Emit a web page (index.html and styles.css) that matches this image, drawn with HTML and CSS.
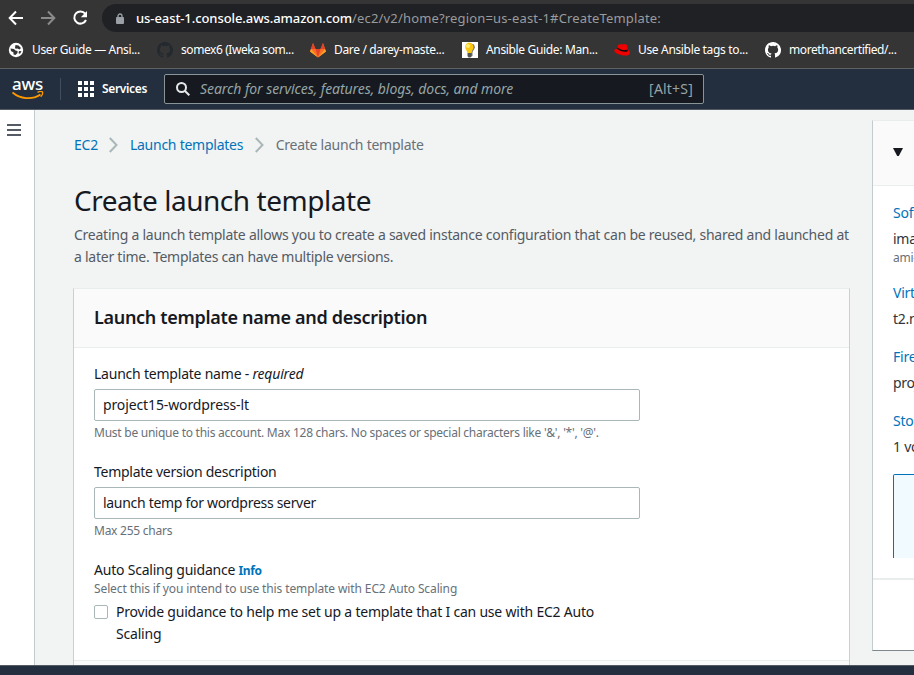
FILE: index.html
```
<!DOCTYPE html>
<html lang="en">
<head>
<meta charset="utf-8">
<title>Create launch template</title>
<link rel="stylesheet" href="styles.css">
</head>
<body>
<div class="toolbar">
  <svg class="nav-icons" width="92" height="28" viewBox="0 0 92 28" fill="none" stroke-width="2">
    <path d="M23 14H10M16 7.500L9.700 14l6.300 6.500" stroke="#fff"/>
    <path d="M41 14h13M48 7.500l6.300 6.500-6.300 6.500" stroke="#8b8b8b"/>
    <path d="M85.200 9.700A6.100 6.100 0 1 0 86 16" stroke="#fff"/>
    <path d="M87 7v6.200h-6.200z" fill="#fff"/>
  </svg>
  <div class="omnibox">
    <svg class="lock" width="8" height="11" viewBox="0 0 8 11"><path d="M2 5V3a2 2 0 0 1 4 0v2" fill="none" stroke="#9aa0a6" stroke-width="1.300"/><rect y="4" width="8" height="7" rx="1" fill="#9aa0a6"/></svg>
    <span class="host">us-east-1.console.aws.amazon.com</span><span class="path">/ec2/v2/home?region=us-east-1#CreateTemplate:</span>
  </div>
</div>
<div class="bookmarks">
  <div class="bm"><svg width="16" height="16" viewBox="0 0 16 16"><circle cx="8" cy="8" r="7.200" fill="#fff"/><path d="M2.500 6.500l3.500.500 1.500 1.500 2 .500v2L7.500 13l-2-.500V10.500L3 9zM7.500 3l3 .500L13 6l-1.500 1.500-2-1-2 .300L7 5.500zM11 9l2.500.300-1.500 2.500-1.500-.500z" fill="#353535"/></svg><span>User Guide — Ansi...</span></div>
  <div class="bm"><svg width="16" height="16" viewBox="0 0 16 16"><path fill="#24292f" d="M8 0C3.580 0 0 3.580 0 8c0 3.540 2.290 6.530 5.470 7.590.4.070.55-.17.55-.38v-1.490c-2.010.37-2.530-.49-2.690-.94-.09-.23-.48-.94-.82-1.130-.28-.15-.68-.52-.01-.53.63-.01 1.080.58 1.230.82.72 1.210 1.870.87 2.330.66.070-.52.28-.87.51-1.070-1.780-.2-3.640-.89-3.640-3.950 0-.87.31-1.590.82-2.150-.08-.2-.36-1.020.08-2.120 0 0 .67-.21 2.200.82a7.400 7.400 0 0 1 4 0c1.530-1.040 2.200-.82 2.200-.82.44 1.100.16 1.920.08 2.120.51.56.82 1.270.82 2.150 0 3.070-1.870 3.750-3.650 3.950.29.25.54.73.54 1.480v2.200c0 .21.15.46.55.38A8 8 0 0 0 8 0z"/></svg><span>somex6 (Iweka som...</span></div>
  <div class="bm"><svg width="16" height="16" viewBox="0 0 16 16"><path fill="#fc6d26" d="M0 9.500L3 1l2.500 6h5L13 1l3 8.500L8 15.500z"/><path fill="#e24329" d="M5.500 7h5L8 15.500zM3 1l2.500 6H1zM13 1l-2.500 6H15z"/><path fill="#fca326" d="M1 7l-1 2.500 8 6zM15 7l1 2.500-8 6z"/></svg><span>Dare / darey-maste...</span></div>
  <div class="bm"><svg width="16" height="16" viewBox="0 0 16 16"><path fill="#fff" d="M0 0h16v16H0z"/><path d="M9 1.500l3 1 1 3-2.500 4.500v4L8.500 15z" fill="#777"/><path fill="#fbc711" d="M7 .500a4.700 4.700 0 0 1 3.200 8L9.500 11h-4L4.500 8.500a4.700 4.700 0 0 1 2.500-8z"/><circle cx="6" cy="4" r="2" fill="#ffec75"/><path fill="#555" d="M5.500 11h4v3l-1 1.500h-2l-1-1.500z"/></svg><span>Ansible Guide: Man...</span></div>
  <div class="bm"><svg width="16" height="16" viewBox="0 0 16 16"><path fill="#e00" d="M4 3l3.500-1 1.500.500 2-.500 2 1 .800 4.500 1.700 1.500c1.500 3-1 4.600-4.500 4.500C6 13.500-.500 10.500.300 8 .700 7 2 6.800 3 7z"/><path fill="#180808" d="M3.200 6.500c2 2.700 8 4.500 10.700 2.500l-.400-1.500C10.500 9 5.500 7.500 3.500 5.500z"/></svg><span>Use Ansible tags to...</span></div>
  <div class="bm"><svg width="16" height="16" viewBox="0 0 16 16"><path fill="#fff" d="M8 0C3.580 0 0 3.580 0 8c0 3.540 2.290 6.530 5.470 7.590.4.070.55-.17.55-.38v-1.490c-2.010.37-2.530-.49-2.690-.94-.09-.23-.48-.94-.82-1.130-.28-.15-.68-.52-.01-.53.63-.01 1.080.58 1.230.82.72 1.210 1.870.87 2.330.66.070-.52.28-.87.51-1.070-1.780-.2-3.640-.89-3.640-3.950 0-.87.31-1.590.82-2.150-.08-.2-.36-1.020.08-2.120 0 0 .67-.21 2.200.82a7.400 7.400 0 0 1 4 0c1.530-1.040 2.200-.82 2.200-.82.44 1.100.16 1.920.08 2.120.51.56.82 1.270.82 2.150 0 3.070-1.870 3.750-3.650 3.950.29.25.54.73.54 1.480v2.200c0 .21.15.46.55.38A8 8 0 0 0 8 0z"/></svg><span>morethancertified/...</span></div>
</div>
<div class="aws-nav">
  <div class="logo">
    <span class="logo-text">aws</span>
    <svg class="smile" width="32" height="9" viewBox="0 0 32 9" fill="none" stroke="#f90"><path d="M.500 1.500C8 8 20 9.300 28.500 3.500" stroke-width="1.800"/><path d="M25.500 1.300c2-.900 4-1 5-.400.400 1.300-.300 3.500-1.800 5" stroke-width="1.300"/></svg>
  </div>
  <div class="sep"></div>
  <svg class="grid-icon" width="16" height="16" viewBox="0 0 16 16" fill="#fff"><path d="M0 0h4v4H0zM6 0h4v4H6zM12 0h4v4h-4zM0 6h4v4H0zM6 6h4v4H6zM12 6h4v4h-4zM0 12h4v4H0zM6 12h4v4H6zM12 12h4v4h-4z"/></svg>
  <span class="services">Services</span>
  <div class="search">
    <svg width="14" height="14" viewBox="0 0 14 14" fill="none" stroke="#e5e9e9" stroke-width="2"><circle cx="5.500" cy="5.500" r="4.500"/><path d="M9 9l4.300 4.300"/></svg>
    <span class="placeholder">Search for services, features, blogs, docs, and more</span>
    <span class="alt">[Alt+S]</span>
  </div>
</div>
<div class="body">
  <div class="rail"><svg width="14" height="12" viewBox="0 0 14 12" fill="#545b64"><path d="M0 0h14v2H0zM0 5h14v2H0zM0 10h14v2H0z"/></svg></div>
  <main class="main">
    <nav class="crumbs">
      <a>EC2</a>
      <svg width="9" height="16" viewBox="0 0 9 16" fill="none" stroke="#aab7b8" stroke-width="2"><path d="M.800 1L7.500 8 .800 15"/></svg>
      <a>Launch templates</a>
      <svg width="9" height="16" viewBox="0 0 9 16" fill="none" stroke="#aab7b8" stroke-width="2"><path d="M.800 1L7.500 8 .800 15"/></svg>
      <span>Create launch template</span>
    </nav>
    <h1>Create launch template</h1>
    <p class="intro">Creating a launch template allows you to create a saved instance configuration that can be reused, shared and launched at<br>a later time. Templates can have multiple versions.</p>
    <section class="card">
      <h2>Launch template name and description</h2>
      <div class="fields">
        <div class="label">Launch template name - <i>required</i></div>
        <div class="input name">project15-wordpress-lt</div>
        <div class="hint">Must be unique to this account. Max 128 chars. No spaces or special characters like '&amp;', '*', '@'.</div>
        <div class="label version">Template version description</div>
        <div class="input">launch temp for wordpress server</div>
        <div class="hint">Max 255 chars</div>
        <div class="label guidance">Auto Scaling guidance <b>Info</b></div>
        <div class="hint tight">Select this if you intend to use this template with EC2 Auto Scaling</div>
        <div class="check"><span class="box"></span><span>Provide guidance to help me set up a template that I can use with EC2 Auto<br>Scaling</span></div>
      </div>
      <div class="next"></div>
    </section>
  </main>
  <aside class="summary">
    <div class="summary-head"><svg width="10" height="8" viewBox="0 0 10 8"><path d="M0 0h10L5.800 8H4.200z" fill="#16191f"/></svg></div>
    <div class="summary-body">
      <a>Software Image (AMI)</a>
      <p>image for wordpress</p>
      <small>ami-</small>
      <a class="gap">Virtual server type</a>
      <p>t2.micro</p>
      <a class="gap">Firewall</a>
      <p>project15</p>
      <a class="gap">Storage</a>
      <p>1 volume(s)</p>
      <div class="notice"></div>
    </div>
    <div class="summary-foot"></div>
  </aside>
</div>
<footer></footer>
</body>
</html>
```
FILE: styles.css
```
* { box-sizing: border-box; }
body { margin: 0; width: 914px; height: 675px; overflow: hidden; background: #f2f3f3; color: #16191f; font: 14px/22px "Noto Sans", sans-serif; letter-spacing: -0.25px; white-space: nowrap; }
svg { display: block; flex: none; }
h1, h2, p { margin: 0; }
a { color: #0073bb; }

.toolbar { display: flex; height: 36px; padding-top: 4px; background: #353535; }
.nav-icons { margin-right: 10px; }
.omnibox { display: flex; flex: 1; align-items: center; height: 28px; padding-left: 14px; border-radius: 14px 0 0 14px; background: #202124; font-size: 13px; }
.lock { margin-right: 12px; }
.host { color: #fff; font-weight: 500; letter-spacing: -0.08px; }
.path { color: #9a9b9d; letter-spacing: 0.16px; }

.bookmarks { display: flex; height: 33px; padding: 0 0 4px 8px; background: #353535; border-bottom: 1px solid #606162; color: #fff; font-size: 12px; letter-spacing: -0.34px; }
.bm { display: flex; flex: none; align-items: center; gap: 8px; width: 152px; }
.bm:first-child { width: 149px; }
.bm:nth-child(2) { width: 153px; letter-spacing: -0.42px; }
.bm:nth-child(5) { width: 151px; }
.bm:nth-child(6) { letter-spacing: -0.42px; }

.aws-nav { display: flex; align-items: center; height: 41px; background: #232f3e; border-bottom: 1px solid #545b64; color: #fff; }
.logo { width: 32px; margin-left: 12px; }
.logo-text { display: block; height: 14px; font: 500 17px/12px "Noto Sans", sans-serif; letter-spacing: -0.2px; }
.smile { margin-top: -1px; }
.sep { width: 1px; height: 22px; margin: 0 17px 0 16px; background: #414d5c; }
.services { width: 46px; margin: 0 16px 0 8px; font-size: 12px; font-weight: 600; letter-spacing: -0.35px; }
.search { display: flex; align-items: center; width: 540px; height: 30px; padding: 0 10px 0 11px; border: 1px solid #879596; border-radius: 2px; background: #16191f; color: #95a5a6; }
.placeholder { margin-left: 10px; font-style: italic; letter-spacing: -0.07px; }
.alt { margin-left: auto; letter-spacing: 0.2px; }

.body { display: flex; height: 555px; overflow: hidden; }
.rail { flex: none; width: 35px; padding: 14px 0 0 7px; background: #fff; border-right: 1px solid #c3cccc; }
.main { flex: none; width: 837px; padding: 24px 22px 0 38px; }
.crumbs { display: flex; align-items: center; height: 22px; padding-left: 1px; color: #687078; }
.crumbs svg { margin: 0 12px 0 11px; }
.crumbs svg + a { margin-right: 0.5px; }
h1 { margin: 26px 0 6px 1px; font-size: 28px; line-height: 36px; font-weight: 400; letter-spacing: -0.46px; }
.intro { margin-left: 1px; color: #545b64; letter-spacing: -0.25px; }
.card { margin-top: 20px; height: 400px; background: #fff; border: 1px solid #c9d0d0; border-top-color: #eaeded; }
h2 { height: 59px; padding: 17px 20px; background: #fafafa; border-bottom: 1px solid #eaeded; font-size: 18px; line-height: 22px; font-weight: 600; letter-spacing: -0.31px; }
.fields { height: 312px; padding: 15px 20px 0; }
.label { letter-spacing: -0.22px; }
.label i { letter-spacing: -0.19px; }
.label b { color: #0073bb; font-size: 12px; letter-spacing: -0.4px; }
.input { width: 546px; height: 32px; margin: 4px 0 3px; padding: 4px 8px; border: 1px solid #aab7b8; border-radius: 2px; letter-spacing: -0.3px; }
.name { letter-spacing: -0.12px; }
.hint { color: #687078; font-size: 12px; line-height: 18px; }
.version, .guidance { margin-top: 19px; }
.version { letter-spacing: -0.27px; }
.tight { margin-top: -2px; letter-spacing: -0.11px; }
.check { display: flex; gap: 8px; margin-top: 3px; letter-spacing: -0.21px; }
.box { width: 14px; height: 14px; margin-top: 4px; border: 1px solid #aab7b8; border-radius: 2px; background: #fff; }
.next { border-top: 1px solid #eaeded; height: 20px; background: #fafafa; }

.summary { flex: none; width: 300px; height: 531px; margin-top: 10px; background: #fff; border: 1px solid #c3cccc; border-top-color: #eaeded; border-bottom-color: #7d898c; }
.summary-head { height: 65px; padding: 27px 20px; background: #fafafa; border-bottom: 1px solid #eaeded; }
.summary-body { height: 392px; padding: 16px 20px 0; overflow: hidden; }
.summary-body a { display: block; margin-bottom: 4px; }
.summary-body p { line-height: 20px; padding-top: 1px; color: #30343a; }
.summary-body small { display: block; color: #687078; font-size: 12px; line-height: 18px; }
.summary-body .gap { margin-top: 17px; }
.summary-body small + .gap { margin-top: 15px; }
.notice { height: 84px; margin-top: 17px; background: #f1faff; border: 1px solid #0073bb; border-bottom: 0; border-radius: 2px 2px 0 0; }
.summary-foot { border-top: 2px solid #eaeded; }
footer { height: 10px; background: #232f3e; border-top: 1px solid #545b64; }
```
